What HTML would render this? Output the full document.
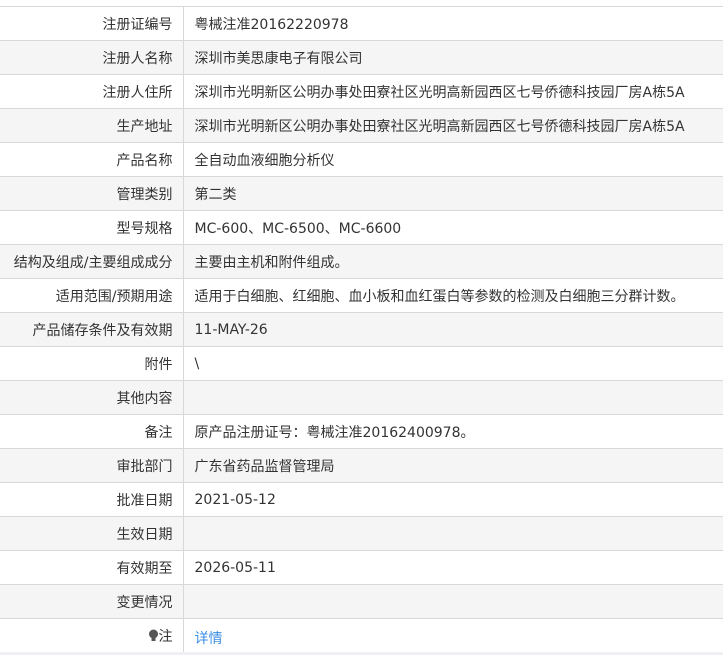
<!DOCTYPE html>
<html><head><meta charset="utf-8"><style>
html,body{margin:0;padding:0;background:#eef0f6;}
body{width:723px;height:655px;overflow:hidden;font-family:"DejaVu Sans","Noto Sans CJK SC",sans-serif;font-size:14px;color:#333;}
.wrap{background:#fff;height:652px;padding-top:6px;box-sizing:border-box;}
table{border-collapse:collapse;width:723px;table-layout:fixed;}
td{height:33px;border-top:1px solid #d8d8d8;padding:0;white-space:nowrap;overflow:hidden;}
td.l{width:183px;text-align:right;padding-right:10px;box-sizing:border-box;border-right:1px solid #d8d8d8;}
td.r{padding-left:11px;}
tr:nth-child(even) td{background:#f5f5f5;}
a{color:#3b8ee6;text-decoration:none;position:relative;top:2px;}
</style></head><body><div class="wrap"><table>
<tr><td class="l">注册证编号</td><td class="r">粤械注准20162220978</td></tr>
<tr><td class="l">注册人名称</td><td class="r">深圳市美思康电子有限公司</td></tr>
<tr><td class="l">注册人住所</td><td class="r">深圳市光明新区公明办事处田寮社区光明高新园西区七号侨德科技园厂房A栋5A</td></tr>
<tr><td class="l">生产地址</td><td class="r">深圳市光明新区公明办事处田寮社区光明高新园西区七号侨德科技园厂房A栋5A</td></tr>
<tr><td class="l">产品名称</td><td class="r">全自动血液细胞分析仪</td></tr>
<tr><td class="l">管理类别</td><td class="r">第二类</td></tr>
<tr><td class="l">型号规格</td><td class="r">MC-600、MC-6500、MC-6600</td></tr>
<tr><td class="l">结构及组成/主要组成成分</td><td class="r">主要由主机和附件组成。</td></tr>
<tr><td class="l">适用范围/预期用途</td><td class="r">适用于白细胞、红细胞、血小板和血红蛋白等参数的检测及白细胞三分群计数。</td></tr>
<tr><td class="l">产品储存条件及有效期</td><td class="r">11-MAY-26</td></tr>
<tr><td class="l">附件</td><td class="r">\</td></tr>
<tr><td class="l">其他内容</td><td class="r"></td></tr>
<tr><td class="l">备注</td><td class="r">原产品注册证号：粤械注准20162400978。</td></tr>
<tr><td class="l">审批部门</td><td class="r">广东省药品监督管理局</td></tr>
<tr><td class="l">批准日期</td><td class="r">2021-05-12</td></tr>
<tr><td class="l">生效日期</td><td class="r"></td></tr>
<tr><td class="l">有效期至</td><td class="r">2026-05-11</td></tr>
<tr><td class="l">变更情况</td><td class="r"></td></tr>
<tr><td class="l"><svg width="11" height="13" viewBox="0 0 11 13" style="vertical-align:-1px"><circle cx="5.5" cy="5" r="4.5" fill="#555"/><rect x="3.5" y="9" width="4" height="3" fill="#555"/></svg>注</td><td class="r"><a>详情</a></td></tr>
</table></div></body></html>
